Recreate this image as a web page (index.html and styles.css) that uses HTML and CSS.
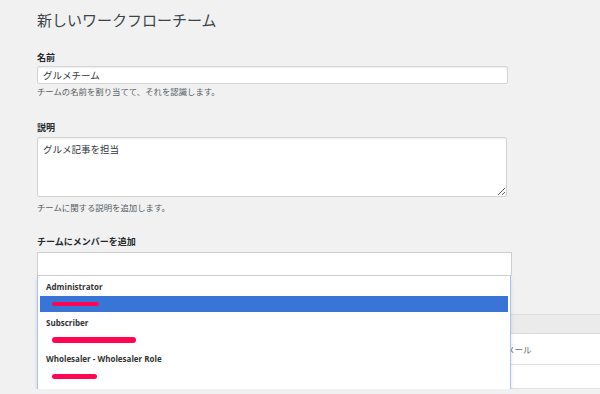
FILE: index.html
```html
<!DOCTYPE html>
<html lang="ja">
<head>
    <meta charset="UTF-8">
    <meta name="viewport" content="width=device-width, initial-scale=1.0">
    <title>新しいワークフローチーム</title>
    <link rel="stylesheet" href="styles.css">
</head>
<body>
    <div class="wrap">
        <h1>新しいワークフローチーム</h1>

        <div class="field field-name">
            <label class="field-label">名前</label>
            <input class="text-input" type="text" value="グルメチーム">
            <p class="help">チームの名前を割り当てて、それを認識します。</p>
        </div>

        <div class="field field-desc">
            <label class="field-label">説明</label>
            <textarea class="text-area">グルメ記事を担当</textarea>
            <p class="help">チームに関する説明を追加します。</p>
        </div>

        <div class="field field-members">
            <label class="field-label">チームにメンバーを追加</label>
            <div class="select-box">
                <div class="select-search"></div>

                <!-- 開いたドロップダウン -->
                <ul class="dropdown">
                    <li class="group">
                        <div class="group-label">Administrator</div>
                        <div class="option highlighted"><span class="redact" style="width: 47px; height: 4px;"></span></div>
                    </li>
                    <li class="group">
                        <div class="group-label">Subscriber</div>
                        <div class="option"><span class="redact" style="width: 84px; height: 6px;"></span></div>
                    </li>
                    <li class="group">
                        <div class="group-label">Wholesaler - Wholesaler Role</div>
                        <div class="option"><span class="redact" style="width: 45px; height: 5px;"></span></div>
                    </li>
                </ul>
            </div>
        </div>

        <div class="members-table">
            <div class="thead"></div>
            <div class="row row-first">
                <div class="cell"></div>
                <div class="cell cell-mail">メール</div>
            </div>
            <div class="row row-second"></div>
        </div>
    </div>
</body>
</html>
```

FILE: styles.css
```css
body {
    margin: 0;
    background: #f1f1f1;
    font-family: "Noto Sans CJK JP", "Noto Sans", sans-serif;
    color: #23282d;
    overflow: hidden;
}

.wrap {
    padding-left: 37px;
}

h1 {
    margin: 0;
    padding-top: 10px;
    font-size: 15px;
    line-height: 20px;
    font-weight: normal;
    color: #3c434a;
}

/* フォーム */
.field-label {
    display: block;
    font-size: 9px;
    font-weight: bold;
    line-height: 14px;
}

.field-name {
    margin-top: 21px;
}

.field-desc {
    margin-top: 24px;
}

.field-members {
    margin-top: 22px;
}

.text-input {
    display: block;
    box-sizing: border-box;
    width: 471px;
    height: 18px;
    margin: 1px 0 0;
    padding: 0 5px;
    border: 1px solid #d4d4d4;
    border-radius: 2px;
    box-shadow: inset 0 1px 2px rgba(0,0,0,0.07);
    background: #fff;
    font-family: inherit;
    font-size: 9.5px;
    color: #32373c;
}

.text-area {
    display: block;
    box-sizing: border-box;
    width: 470px;
    height: 60px;
    margin: 2px 0 0;
    padding: 4px 5px;
    border: 1px solid #d4d4d4;
    border-radius: 2px;
    box-shadow: inset 0 1px 2px rgba(0,0,0,0.07);
    background: #fff;
    font-family: inherit;
    font-size: 9.5px;
    line-height: 14px;
    color: #32373c;
}

.help {
    margin: 1px 0 0;
    font-size: 8.4px;
    line-height: 12px;
    color: #555d66;
}

.field-desc .help {
    margin-top: 4px;
}

/* メンバー選択 */
.select-box {
    position: relative;
    width: 475px;
    margin-top: 3px;
}

.select-search {
    box-sizing: border-box;
    height: 24px;
    border: 1px solid #cfcfcf;
    background: #fff;
}

.dropdown {
    position: absolute;
    top: 100%;
    left: 0;
    z-index: 10;
    box-sizing: border-box;
    width: 474px;
    margin: 0;
    padding: 0 2px 6px;
    list-style: none;
    background: #fff;
    border: 1px solid #a9c4f0;
    border-top: none;
    border-radius: 0 0 3px 3px;
    box-shadow: 0 3px 4px rgba(0,0,0,0.12);
}

.group-label {
    padding: 3px 0 1px 6px;
    font-family: "Open Sans", "Noto Sans", sans-serif;
    font-size: 8px;
    font-weight: bold;
    line-height: 16px;
    color: #333;
}

.option {
    display: flex;
    align-items: center;
    height: 16px;
    padding-left: 12px;
}

.option.highlighted {
    background: #3875d7;
}

.redact {
    display: block;
    background: #ff0552;
    border-radius: 3px;
}

/* 後ろのテーブル */
.members-table {
    margin-top: 38px;
    font-size: 8.5px;
    color: #646970;
}

.thead {
    height: 18px;
    background: #ebebeb;
    border-top: 1px solid #dcdcdc;
    border-bottom: 1px solid #dcdcdc;
}

.row {
    background: #fff;
    border-bottom: 1px solid #e1e1e1;
}

.row-first {
    display: grid;
    grid-template-columns: 469px 1fr;
    height: 30px;
    align-items: center;
}

.row-second {
    height: 23px;
}
```
